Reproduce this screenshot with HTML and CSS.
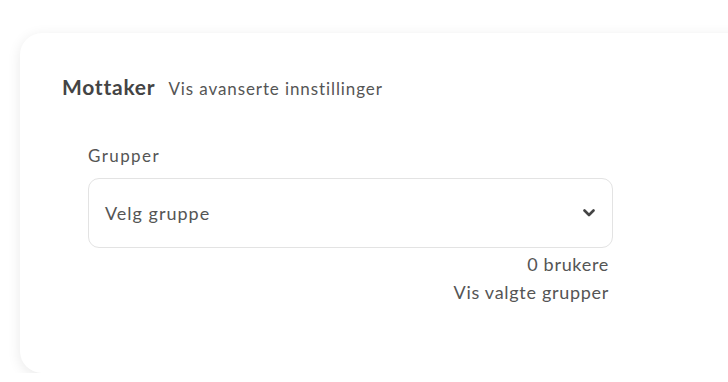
FILE: index.html
```html
<!DOCTYPE html>
<html lang="no">
<head>
<meta charset="utf-8">
<link rel="stylesheet" href="styles.css">
</head>
<body>
<div class="page">
  <section class="card">
    <div class="head">
      <h2 class="title">Mottaker</h2>
      <span class="advanced">Vis avanserte innstillinger</span>
    </div>
    <div class="group">
      <label class="label">Grupper</label>
      <div class="select">
        <span class="placeholder">Velg gruppe</span>
        <svg class="chev" width="12" height="8" viewBox="0 0 12 8"><path d="M1.5 1.5 L6 6 L10.5 1.5" fill="none" stroke="#444" stroke-width="2.6" stroke-linecap="round" stroke-linejoin="round"/></svg>
      </div>
      <div class="meta">
        <span>0 brukere</span>
        <span>Vis valgte grupper</span>
      </div>
    </div>
  </section>
</div>
</body>
</html>
```

FILE: styles.css
```css
* { box-sizing: border-box; }
html, body { margin: 0; background: #fff; }
body { font-family: Lato, "Open Sans", sans-serif; color: #555; overflow: hidden; }
.page { padding: 33px 0 0 20px; width: 760px; }
.card {
  width: 740px;
  height: 340px;
  background: #fff;
  border-radius: 22px;
  box-shadow: 0 3px 14px rgba(0,0,0,0.09);
  padding: 40px 0 0 42px;
}
.head { display: flex; align-items: baseline; gap: 13px; }
.title { margin: 0; font-size: 21px; font-weight: 700; color: #444; letter-spacing: 0.75px; line-height: 28px; }
.advanced { font-size: 17px; color: #555; letter-spacing: 0.9px; }
.group { margin: 44px 0 0 26px; width: 525px; display: flex; flex-direction: column; }
.label { font-size: 17px; color: #555; line-height: 22px; letter-spacing: 1.4px; }
.select {
  margin-top: 11px;
  height: 70px;
  border: 1px solid #e3e3e3;
  border-radius: 11px;
  display: flex;
  align-items: center;
  justify-content: space-between;
  padding: 0 17px 0 16px;
}
.placeholder { font-size: 18px; color: #555; letter-spacing: 1px; }
.chev { display: block; }
.meta { display: flex; flex-direction: column; align-items: flex-end; padding-right: 4px; font-size: 18px; color: #555; line-height: 28px; margin-top: 2px; letter-spacing: 0.7px; }
```
